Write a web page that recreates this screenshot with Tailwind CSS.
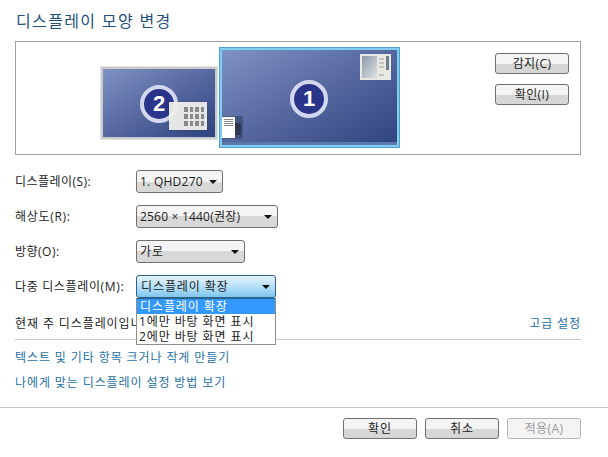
<!DOCTYPE html>
<html lang="ko">
<head>
  <meta charset="UTF-8">
  <title>디스플레이 모양 변경</title>
  <meta name="viewport" content="width=device-width, initial-scale=1.0">
  <script src="https://cdn.jsdelivr.net/npm/@tailwindcss/browser@4"></script>
</head>
<body class="bg-white w-[608px] h-[457px] overflow-hidden text-[12px] leading-[16px] text-[#222] font-['Open_Sans','Noto_Sans_CJK_KR',sans-serif]">

  <div class="h-[408px] pl-[15px] pr-[27px] pt-[10px] border-b border-[#c8c8c8]">
    <h1 class="h-[31px] pl-px text-[16px] leading-[22px] font-normal tracking-[1.35px] text-[#1f4f7e]">디스플레이 모양 변경</h1>

    <!-- monitor preview -->
    <div class="relative w-[566px] h-[114px] border border-[#a0a0a0]">
      <!-- monitor 2 -->
      <div class="absolute left-[84px] top-[24px] w-[118px] h-[74px] border-[3px] border-[#c9cacb] bg-gradient-to-br from-[#7f92c4] via-[#56689f] to-[#2f437f] outline outline-1 -outline-offset-1 outline-[#e4e4e4]">
        <div class="absolute left-[37px] top-[16px] w-[38px] h-[38px] rounded-full bg-[#2a3488] border-[4px] border-[#d3d8ef] text-white text-[22px] leading-[30px] font-bold text-center font-['Liberation_Sans',sans-serif]">2</div>
        <div class="absolute left-[66px] top-[33px] w-[38px] h-[28px] bg-[#eeeeea]/95 shadow-sm grid grid-cols-4 gap-[2px] pl-[15px] pr-[3px] pt-[5px] pb-[4px]">
          <i class="bg-[#8a8a8a]"></i><i class="bg-[#8a8a8a]"></i><i class="bg-[#8a8a8a]"></i><i class="bg-[#8a8a8a]"></i>
          <i class="bg-[#8a8a8a]"></i><i class="bg-[#8a8a8a]"></i><i class="bg-[#8a8a8a]"></i><i class="bg-[#8a8a8a]"></i>
          <i class="bg-[#8a8a8a]"></i><i class="bg-[#8a8a8a]"></i><i class="bg-[#8a8a8a]"></i><i class="bg-[#8a8a8a]"></i>
        </div>
      </div>
      <!-- monitor 1 -->
      <div class="absolute left-[203px] top-[5px] w-[181px] h-[101px] border-[3px] border-[#7fcdf0] bg-gradient-to-br from-[#7f92c4] via-[#56689f] to-[#2f437f] outline outline-1 -outline-offset-1 outline-[#4f9fcf]">
        <div class="absolute left-[68px] top-[30px] w-[38px] h-[38px] rounded-full bg-[#2a3488] border-[4px] border-[#d3d8ef] text-white text-[22px] leading-[30px] font-bold text-center font-['Liberation_Sans',sans-serif]">1</div>
        <!-- gadget, top right -->
        <div class="absolute left-[138px] top-[4px] w-[31px] h-[26px] bg-[#e8e8e4] flex gap-[2px] p-[2px]">
          <div class="w-[15px] bg-gradient-to-br from-[#8c9aa8] to-[#dfe4e6]"></div>
          <div class="flex-1 flex flex-col gap-[2px] py-[2px]">
            <div class="h-[2px] bg-[#c4c4c0]"></div><div class="h-[2px] bg-[#c4c4c0]"></div><div class="h-[2px] bg-[#c4c4c0]"></div><div class="h-[2px] mt-[4px] bg-[#c4c4c0]"></div>
          </div>
          <div class="w-[3px] h-[14px] bg-[#6f7f92]"></div>
        </div>
        <!-- gadget, bottom left -->
        <div class="absolute left-0 top-[66px] w-[21px] h-[23px] bg-[#43557f] flex">
          <div class="w-[13px] h-[21px] mt-px bg-white flex flex-col gap-px p-[2px]">
            <div class="h-px bg-[#888]"></div><div class="h-px bg-[#888]"></div><div class="h-px bg-[#888]"></div><div class="h-px bg-[#888]"></div>
          </div>
          <div class="w-[6px] h-[12px] mt-[7px] bg-[#2d3850]"></div>
        </div>
        <!-- taskbar -->
        <div class="absolute left-0 right-0 bottom-0 h-[3px] bg-[#5c79ab]"></div>
      </div>
      <!-- side buttons -->
      <div class="absolute left-[479px] top-[11px] flex flex-col gap-[10px]">
        <button class="w-[74px] h-[21px] tracking-[0.4px] rounded-[3px] border border-[#707070] bg-gradient-to-b from-[#f4f4f4] from-50% to-[#d6d6d6] to-50%">감지(C)</button>
        <button class="w-[74px] h-[21px] tracking-[0.4px] rounded-[3px] border border-[#707070] bg-gradient-to-b from-[#f4f4f4] from-50% to-[#d6d6d6] to-50%">확인(I)</button>
      </div>
    </div>

    <!-- settings -->
    <div class="flex flex-col gap-[12px] mt-[15px] pl-0">
      <div class="flex items-center h-[23px]">
        <span class="w-[121px] tracking-[0.45px]">디스플레이(S):</span>
        <div class="flex items-center justify-between w-[87px] h-[23px] pl-[3px] pr-[5px] rounded-[3px] border border-[#707070] bg-gradient-to-b from-[#f4f4f4] from-50% to-[#d8d8d8] to-50%">
          <span class="tracking-[0.25px]">1. QHD270</span><span class="border-x-[4px] border-t-[4px] border-x-transparent border-t-[#111]"></span>
        </div>
      </div>
      <div class="flex items-center h-[23px]">
        <span class="w-[121px] tracking-[0.7px]">해상도(R):</span>
        <div class="flex items-center justify-between w-[142px] h-[23px] pl-[3px] pr-[5px] rounded-[3px] border border-[#707070] bg-gradient-to-b from-[#f4f4f4] from-50% to-[#d8d8d8] to-50%">
          <span class="tracking-[0.2px]">2560 × 1440(권장)</span><span class="border-x-[4px] border-t-[4px] border-x-transparent border-t-[#111]"></span>
        </div>
      </div>
      <div class="flex items-center h-[23px]">
        <span class="w-[121px] tracking-[0.5px]">방향(O):</span>
        <div class="flex items-center justify-between w-[109px] h-[23px] pl-[3px] pr-[5px] rounded-[3px] border border-[#707070] bg-gradient-to-b from-[#f4f4f4] from-50% to-[#d8d8d8] to-50%">
          <span class="tracking-[1px]">가로</span><span class="border-x-[4px] border-t-[4px] border-x-transparent border-t-[#111]"></span>
        </div>
      </div>
      <div class="flex items-center h-[23px]">
        <span class="w-[121px] tracking-[0.65px]">다중 디스플레이(M):</span>
        <div class="relative w-[140px] h-[23px]">
          <div class="flex items-center justify-between h-[23px] pl-[4px] pr-[5px] rounded-[3px] border border-[#2c628b] bg-gradient-to-b from-[#e5f4fc] via-[#b5e0f7] to-[#7fc6ee]">
            <span class="tracking-[0.9px]">디스플레이 확장</span><span class="border-x-[4px] border-t-[4px] border-x-transparent border-t-[#111]"></span>
          </div>
          <ul class="absolute z-10 left-0 top-[23px] w-[140px] h-[47px] border border-[#8e8e8e] border-t-[#2c628b] bg-white leading-[15px] tracking-[0.9px]">
            <li class="bg-[#3399ff] text-white pl-[3px]">디스플레이 확장</li>
            <li class="pl-[2px]">1에만 바탕 화면 표시</li>
            <li class="pl-[2px]">2에만 바탕 화면 표시</li>
          </ul>
        </div>
      </div>
    </div>

    <div class="flex items-center justify-between mt-[18px] h-[16px] tracking-[0.9px]">
      <span class="w-[121px] overflow-hidden whitespace-nowrap">현재 주 디스플레이입니다.</span>
      <a class="text-[#1f6fa8]">고급 설정</a>
    </div>
    <div class="mt-[7px] border-t border-[#c8c8c8]"></div>
    <div class="flex flex-col gap-[9px] mt-[10px] text-[#1f6fa8] tracking-[0.9px]">
      <a>텍스트 및 기타 항목 크거나 작게 만들기</a>
      <a>나에게 맞는 디스플레이 설정 방법 보기</a>
    </div>
  </div>

  <!-- dialog buttons -->
  <div class="flex justify-end gap-[8px] pt-[10px] pr-[27px]">
    <button class="w-[74px] h-[21px] tracking-[0.9px] rounded-[3px] border border-[#707070] bg-gradient-to-b from-[#f4f4f4] from-50% to-[#d6d6d6] to-50%">확인</button>
    <button class="w-[74px] h-[21px] tracking-[0.9px] rounded-[3px] border border-[#707070] bg-gradient-to-b from-[#f4f4f4] from-50% to-[#d6d6d6] to-50%">취소</button>
    <button class="w-[74px] h-[21px] tracking-[0.4px] rounded-[3px] border border-[#b5b5b5] bg-[#f4f4f4] text-[#9a9a9a]">적용(A)</button>
  </div>

</body>
</html>
